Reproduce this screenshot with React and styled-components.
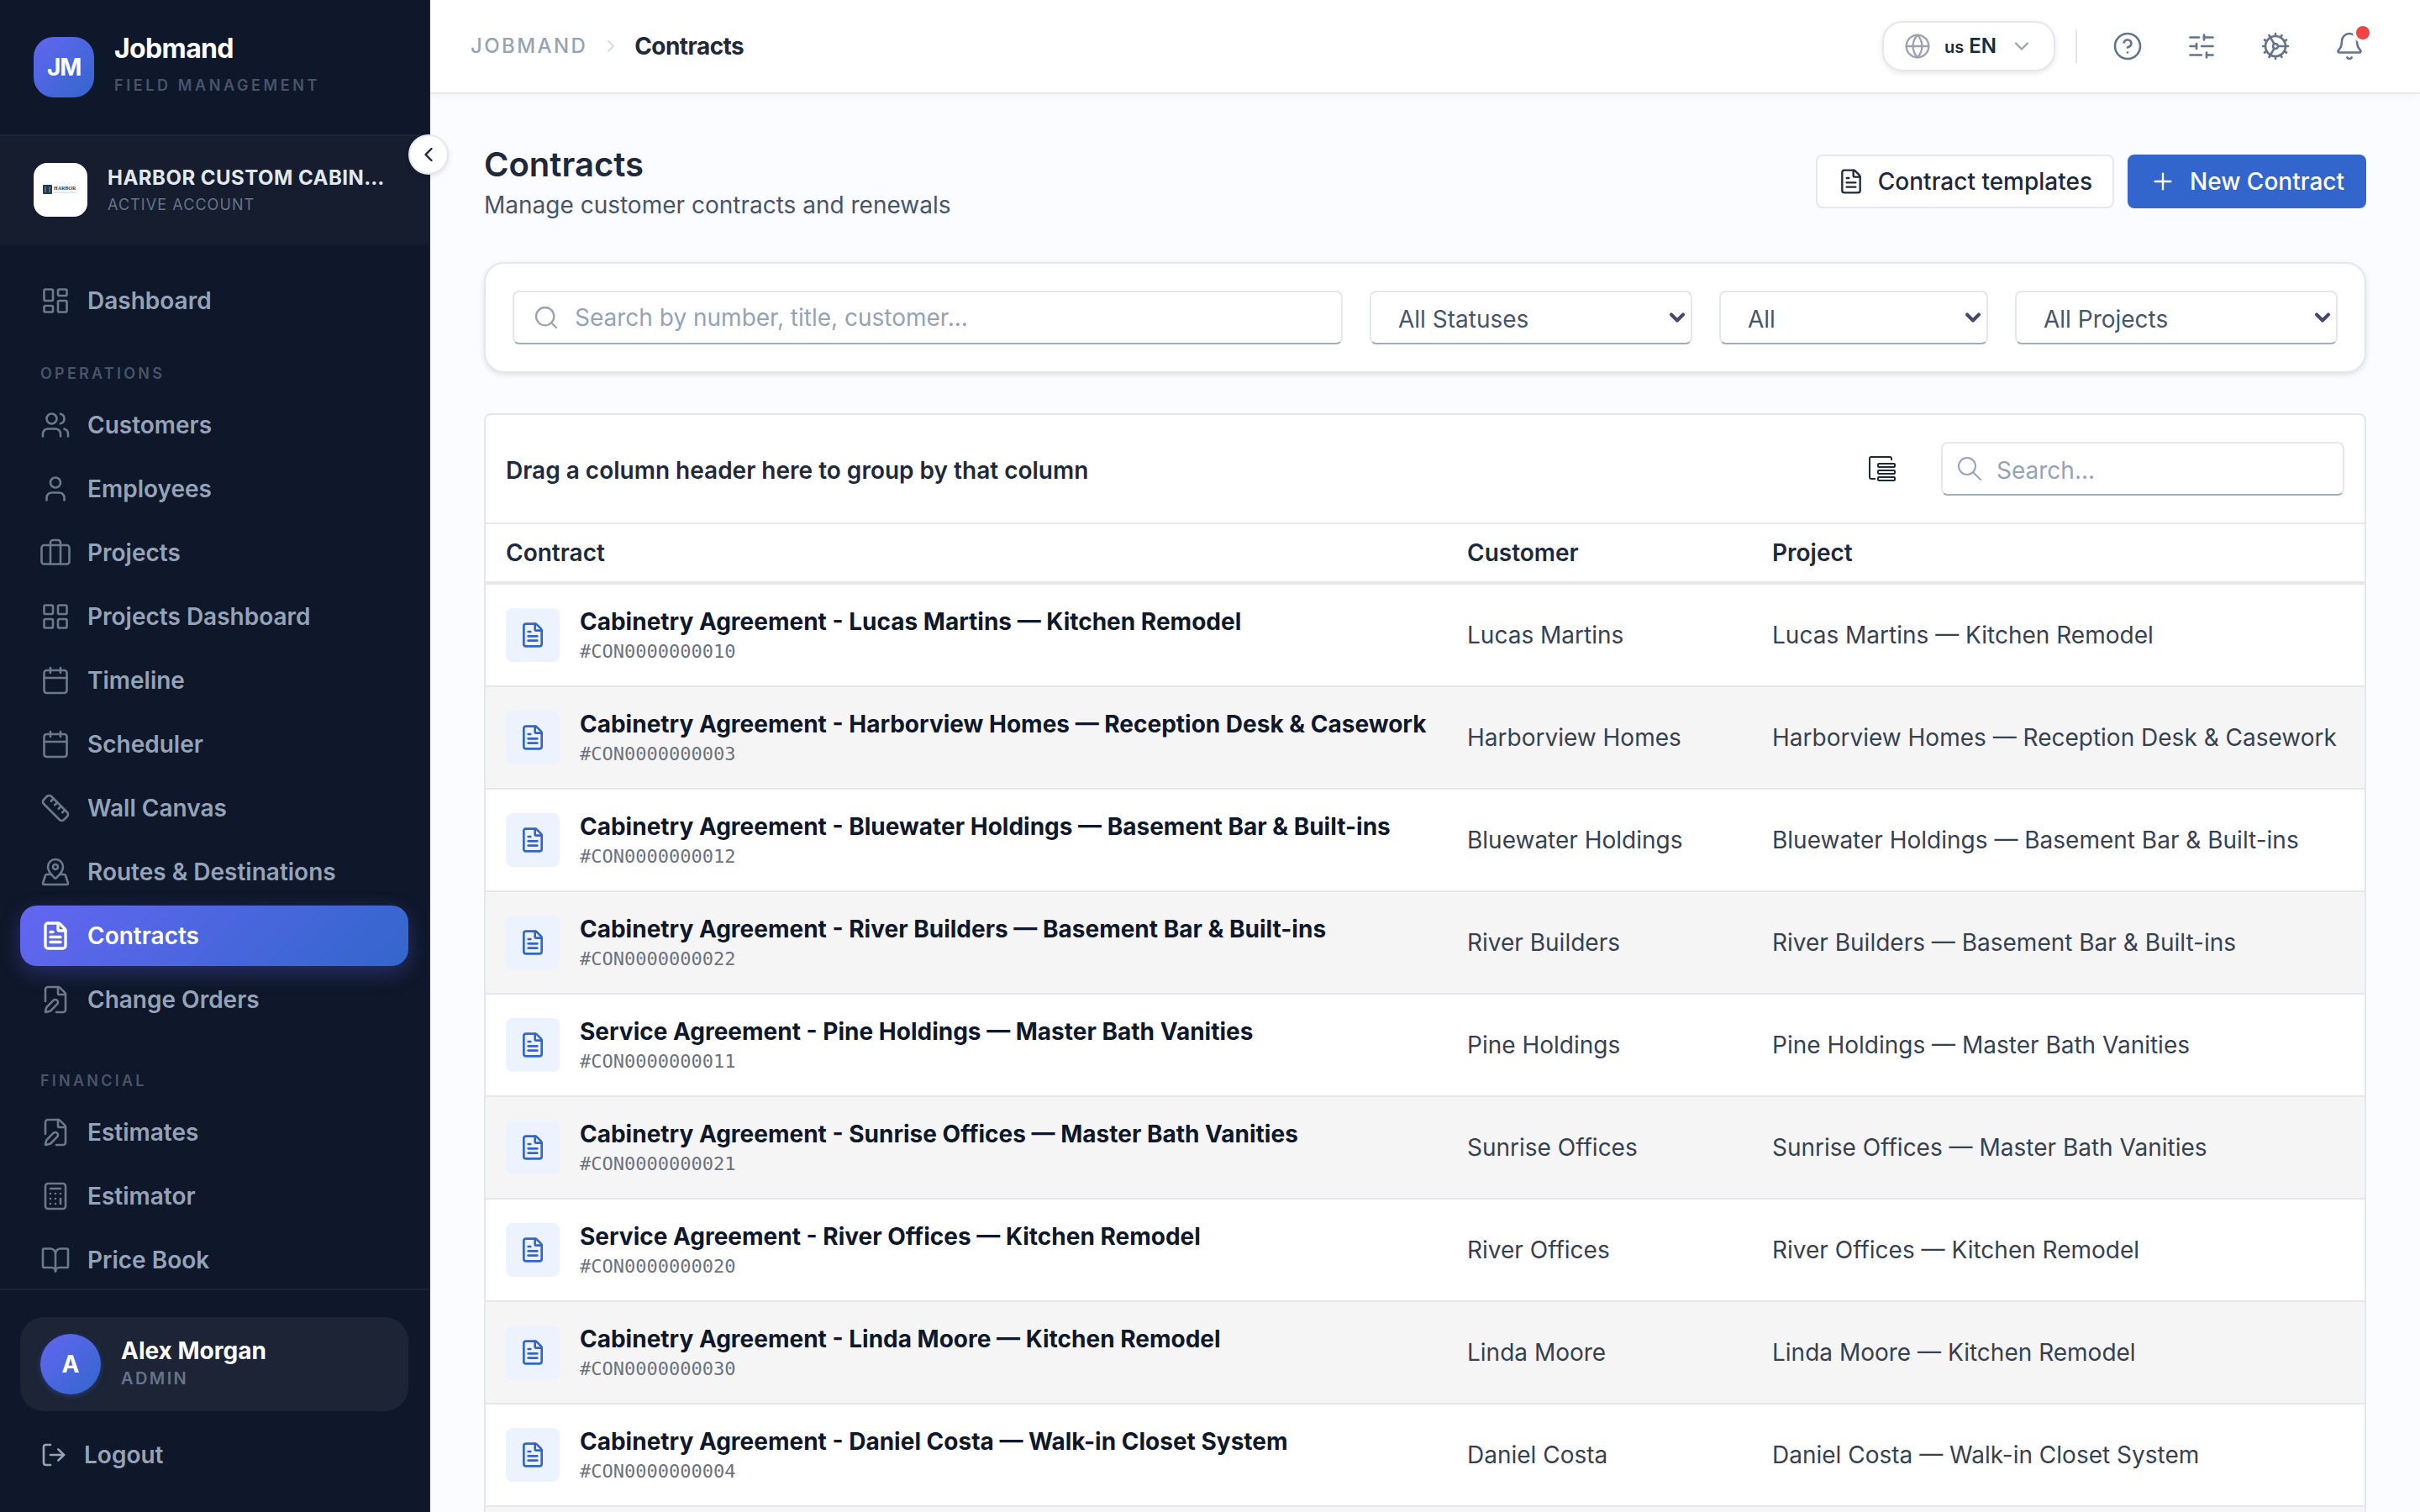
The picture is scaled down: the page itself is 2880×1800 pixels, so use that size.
import React, { useState } from 'react';
import styled, { createGlobalStyle } from 'styled-components';
import {
  LayoutDashboard,
  Users,
  User,
  LayoutGrid,
  Calendar,
  Ruler,
  MapPinned,
  FileText,
  FilePen,
  Calculator,
  BookOpen,
  ChevronLeft,
  ChevronRight,
  ChevronDown,
  Globe,
  CircleQuestionMark,
  SlidersHorizontal,
  Cog,
  Bell,
  Plus,
  Search,
} from 'lucide-react';

const GlobalStyle = createGlobalStyle`
  *, *::before, *::after {
    box-sizing: border-box;
  }

  body {
    margin: 0;
    background: #fbfcff;
    color: #1e293b;
    font-family: Inter, "Liberation Sans", sans-serif;
    font-size: 28px;
    line-height: 40px;
  }

  button, input, select {
    font: inherit;
    color: inherit;
  }

  button {
    cursor: pointer;
  }
`;

const Shell = styled.div`
  display: flex;
  height: 100vh;
  overflow: hidden;
`;

/* ---------- Sidebar ---------- */

const Sidebar = styled.aside`
  position: relative;
  z-index: 2;
  flex: none;
  display: flex;
  flex-direction: column;
  width: 512px;
  background: #0f172a;
  border-right: 2px solid #1a2130;
`;

const Brand = styled.div`
  display: flex;
  align-items: center;
  gap: 24px;
  height: 162px;
  padding: 0 40px;
  border-bottom: 2px solid #1c2536;
`;

const BrandMark = styled.div`
  display: grid;
  place-items: center;
  width: 72px;
  height: 72px;
  border-radius: 24px;
  background: linear-gradient(135deg, #6366f1, #3366cc);
  color: #fff;
  font-weight: 700;
  letter-spacing: -0.04em;
`;

const BrandText = styled.div`
  display: flex;
  flex-direction: column;
  gap: 12px;
  padding-bottom: 8px;
`;

const BrandName = styled.span`
  color: #fff;
  font-size: 32px;
  font-weight: 700;
  letter-spacing: -0.02em;
`;

const Overline = styled.span`
  color: #475569;
  font-size: 18px;
  line-height: 24px;
  font-weight: 600;
  letter-spacing: 0.2em;
  text-transform: uppercase;
`;

const Account = styled.div`
  display: flex;
  align-items: center;
  gap: 24px;
  padding: 32px 40px;
  background: #151d2e;
  border-bottom: 2px solid #131b2c;
`;

const AccountLogo = styled.div`
  flex: none;
  display: grid;
  place-items: center;
  width: 64px;
  height: 64px;
  border-radius: 16px;
  background: #fff;
`;

const AccountText = styled.div`
  display: flex;
  flex-direction: column;
  min-width: 0;
`;

const AccountName = styled.span`
  color: #e2e8f0;
  font-size: 24px;
  line-height: 36px;
  font-weight: 700;
  letter-spacing: 0.02em;
  white-space: nowrap;
`;

const AccountStatus = styled.span`
  color: #64748b;
  font-size: 18px;
  line-height: 28px;
  letter-spacing: 0.06em;
`;

const CollapseButton = styled.button`
  position: absolute;
  top: 160px;
  right: -24px;
  display: grid;
  place-items: center;
  width: 48px;
  height: 48px;
  padding: 0;
  border: 2px solid #e5e7eb;
  border-radius: 50%;
  background: #fff;
  box-shadow: 0 2px 6px rgba(0, 0, 0, 0.1);
`;

const Nav = styled.nav`
  flex: 1;
  min-height: 0;
  padding: 30px 24px 0;
  overflow: hidden;
`;

const NavSection = styled.section`
  margin-top: ${(p) => (p.$tight ? 39 : 49)}px;
`;

const NavHeading = styled.h2`
  margin: 0 0 13px;
  padding: 0 24px;
  color: #475569;
  font-size: 18px;
  line-height: 24px;
  font-weight: 600;
  letter-spacing: 0.18em;
  text-transform: uppercase;
`;

const NavList = styled.ul`
  display: flex;
  flex-direction: column;
  gap: 4px;
  margin: 0;
  padding: 0;
  list-style: none;
`;

const NavLink = styled.a`
  display: flex;
  align-items: center;
  gap: 20px;
  height: 72px;
  padding: 0 24px;
  border-radius: 20px;
  color: ${(p) => (p.$active ? '#fff' : '#94a3b8')};
  background: ${(p) => (p.$active ? 'linear-gradient(135deg, #6366f1, #3366cc)' : 'none')};
  box-shadow: ${(p) => (p.$active ? '0 8px 24px rgba(99, 102, 241, 0.3)' : 'none')};
  font-weight: 600;
  text-decoration: none;

  svg {
    opacity: ${(p) => (p.$active ? 1 : 0.7)};
  }
`;

const SidebarFooter = styled.div`
  display: flex;
  flex-direction: column;
  gap: 16px;
  padding: 32px 24px;
  border-top: 2px solid #1c2536;
`;

const UserCard = styled.div`
  display: flex;
  align-items: center;
  gap: 24px;
  padding: 20px 24px;
  border-radius: 28px;
  background: #1c2436;
`;

const Avatar = styled.div`
  display: grid;
  place-items: center;
  width: 72px;
  height: 72px;
  border-radius: 50%;
  background: linear-gradient(135deg, #6366f1, #3366cc);
  box-shadow: 0 2px 6px rgba(51, 102, 204, 0.4);
  color: #fff;
  font-weight: 700;
`;

const UserText = styled.div`
  display: flex;
  flex-direction: column;
`;

const UserName = styled.span`
  color: #fff;
  line-height: 34px;
  font-weight: 700;
`;

const UserRole = styled.span`
  color: #64748b;
  font-size: 20px;
  line-height: 32px;
  font-weight: 600;
  letter-spacing: 0.12em;
`;

const LogoutButton = styled.button`
  display: flex;
  align-items: center;
  gap: 20px;
  height: 72px;
  padding: 0 24px;
  border: 0;
  background: none;
  color: #94a3b8;
  font-weight: 600;
`;

/* ---------- Top bar ---------- */

const Page = styled.div`
  flex: 1;
  display: flex;
  flex-direction: column;
  min-width: 0;
`;

const TopBar = styled.header`
  flex: none;
  display: flex;
  align-items: center;
  justify-content: space-between;
  height: 112px;
  padding: 0 48px;
  background: #fff;
  border-bottom: 2px solid #e5e7eb;
  box-shadow: 0 2px 12px rgba(15, 23, 42, 0.04);
`;

const Breadcrumb = styled.nav`
  display: flex;
  align-items: center;
  gap: 16px;
`;

const CrumbLink = styled.a`
  color: #94a3b8;
  font-size: 24px;
  font-weight: 500;
  letter-spacing: 0.1em;
  text-decoration: none;
`;

const CrumbCurrent = styled.span`
  color: #1e293b;
  font-weight: 700;
  letter-spacing: -0.02em;
`;

const TopActions = styled.div`
  display: flex;
  align-items: center;
  gap: 16px;
`;

const LanguageButton = styled.button`
  display: flex;
  align-items: center;
  gap: 16px;
  height: 60px;
  padding: 0 24px;
  border: 2px solid #e5e7eb;
  border-radius: 24px;
  background: #fff;
  box-shadow: 0 2px 6px rgba(15, 23, 42, 0.1);
  color: #1f2937;
  font-size: 24px;
  font-weight: 600;

  svg {
    color: #9ca3af;
  }
`;

const Flag = styled.span`
  margin-right: 6px;
  font-size: 20px;
`;

const Divider = styled.span`
  width: 2px;
  height: 40px;
  margin: 0 8px;
  background: #e5e7eb;
`;

const IconButton = styled.button`
  position: relative;
  display: grid;
  place-items: center;
  width: 72px;
  height: 72px;
  padding: 0;
  border: 0;
  background: none;
  color: #64748b;
`;

const UnreadDot = styled.span`
  position: absolute;
  top: 12px;
  right: 12px;
  width: 16px;
  height: 16px;
  border-radius: 50%;
  background: #ef4444;
  box-shadow: 0 0 0 4px #fff;
`;

/* ---------- Content ---------- */

const Content = styled.main`
  display: flex;
  flex-direction: column;
  flex: 1;
  min-height: 0;
  padding: 56px 64px 0;
  overflow: hidden;
`;

const PageHead = styled.div`
  flex: none;
  display: flex;
  align-items: center;
  justify-content: space-between;
  margin-bottom: 48px;
`;

const PageTitle = styled.h1`
  margin: 0;
  font-size: 40px;
  line-height: 56px;
  font-weight: 600;
`;

const PageLead = styled.p`
  margin: 0;
  color: #475569;
`;

const ButtonRow = styled.div`
  display: flex;
  gap: 16px;
`;

const Button = styled.button`
  display: flex;
  align-items: center;
  gap: 16px;
  height: 64px;
  padding: 0 24px;
  border: 2px solid ${(p) => (p.$primary ? '#3366cc' : '#e5e7eb')};
  border-radius: 8px;
  background: ${(p) => (p.$primary ? '#3366cc' : '#fff')};
  color: ${(p) => (p.$primary ? '#fff' : '#1e293b')};
  font-weight: 500;
`;

const FilterCard = styled.form`
  flex: none;
  display: flex;
  gap: 32px;
  margin-bottom: 48px;
  padding: 32px;
  border: 2px solid #e5e7eb;
  border-radius: 24px;
  background: #fff;
  box-shadow: 0 2px 6px rgba(15, 23, 42, 0.12);
`;

const Field = styled.label`
  position: relative;
  flex: ${(p) => (p.$width ? `0 0 ${p.$width}px` : 1)};

  svg {
    position: absolute;
    pointer-events: none;
  }
`;

const TextInput = styled.input`
  display: block;
  width: 100%;
  height: 64px;
  padding: ${(p) => (p.$compact ? '4px 24px 0 64px' : '0 24px 0 72px')};
  border: 2px solid #e5e7eb;
  border-bottom-color: #a0aec0;
  border-radius: 8px;
  background: #fff;
  outline: none;

  &::placeholder {
    color: #94a3b8;
    opacity: 1;
  }

  & + svg {
    top: ${(p) => (p.$compact ? 18 : 16)}px;
    left: ${(p) => (p.$compact ? 20 : 24)}px;
    color: ${(p) => (p.$compact ? '#94a3b8' : '#9ca3af')};
  }
`;

const Select = styled.select`
  appearance: none;
  display: block;
  width: 100%;
  height: 64px;
  padding: 4px 32px 0;
  border: 2px solid #e5e7eb;
  border-bottom-color: #a0aec0;
  border-radius: 8px;
  background: #fff;
  color: #475569;

  & + svg {
    top: 18px;
    right: 4px;
    color: #47496b;
  }
`;

const GridCard = styled.section`
  flex: none;
  border: 2px solid #e5e7eb;
  border-radius: 8px;
  background: #fff;
  overflow: hidden;
`;

const GridToolbar = styled.div`
  display: flex;
  align-items: center;
  justify-content: space-between;
  padding: 32px 24px;
  border-bottom: 2px solid #e5e7eb;
`;

const GroupHint = styled.span`
  padding-top: 4px;
  font-weight: 600;
`;

const ToolbarTools = styled.div`
  display: flex;
  align-items: center;
  gap: 32px;
`;

const ColumnButton = styled(IconButton)`
  width: 76px;
  height: 64px;
  color: #1e293b;
`;

const Table = styled.table`
  width: 100%;
  border-collapse: separate;
  border-spacing: 0;
  table-layout: fixed;
`;

const Th = styled.th`
  width: ${(p) => (p.$width ? `${p.$width}px` : 'auto')};
  height: 72px;
  padding: 0 24px;
  border-bottom: 4px solid #e5e7eb;
  font-weight: 600;
  text-align: left;
`;

const Row = styled.tr`
  &:nth-child(even) {
    background: #f5f5f5;
  }
`;

const Td = styled.td`
  height: 122px;
  padding: 0 24px;
  border-bottom: 2px solid #e5e7eb;
  color: #374151;
  white-space: nowrap;
`;

const ContractCell = styled.div`
  display: flex;
  align-items: center;
  gap: 24px;
`;

const ContractIcon = styled.span`
  display: grid;
  place-items: center;
  width: 64px;
  height: 64px;
  border-radius: 8px;
  background: #edf2ff;
  color: #3366cc;
`;

const ContractTitle = styled.div`
  color: #0f172a;
  font-weight: 700;
`;

const ContractNumber = styled.div`
  color: #6b7280;
  font-family: "DejaVu Sans Mono", "Liberation Mono", monospace;
  font-size: 22px;
  line-height: 32px;
`;

/* ---------- Icons that lucide has in another shape ---------- */

const svgProps = {
  viewBox: '0 0 24 24',
  fill: 'none',
  stroke: 'currentColor',
  strokeLinecap: 'round',
  strokeLinejoin: 'round',
  'aria-hidden': true,
};

function LuggageIcon({ size = 36, strokeWidth = 1.75 }) {
  return (
    <svg {...svgProps} width={size} height={size} strokeWidth={strokeWidth}>
      <rect x="1" y="6" width="22" height="15" rx="2" />
      <path d="M8 21V4a2 2 0 0 1 2-2h4a2 2 0 0 1 2 2v17" />
    </svg>
  );
}

function LogoutIcon() {
  return (
    <svg {...svgProps} width={32} height={32} strokeWidth={2}>
      <path d="M9 21H5a2 2 0 0 1-2-2V5a2 2 0 0 1 2-2h4" />
      <path d="M9 12h12" />
      <path d="m16 7 5 5-5 5" />
    </svg>
  );
}

function ColumnChooserIcon() {
  return (
    <svg width={32} height={30} viewBox="0 0 32 30" fill="none" stroke="currentColor" strokeWidth={2} aria-hidden="true">
      <path d="M27 5V3a2 2 0 0 0-2-2H3a2 2 0 0 0-2 2v22a2 2 0 0 0 2 2h5" />
      <rect x="11" y="9" width="20" height="4" rx="1" />
      <rect x="11" y="17" width="20" height="4" rx="1" />
      <rect x="11" y="25" width="20" height="4" rx="1" />
    </svg>
  );
}

function GridSearchIcon() {
  return (
    <svg width={28} height={28} viewBox="0 0 28 28" fill="none" stroke="currentColor" strokeWidth={2} aria-hidden="true">
      <circle cx="11" cy="11" r="10" />
      <path d="m18 18 9 9" strokeLinecap="round" />
    </svg>
  );
}

function HarborLogo() {
  return (
    <svg width={44} height={16} viewBox="0 0 44 16" aria-hidden="true">
      <rect x="1" y="2" width="11" height="11" rx="1" fill="#1e3a4c" />
      <path d="M4 4v7M9 4v7" stroke="#8fa3b0" strokeWidth="1" />
      <text x="14" y="8" fontFamily="Liberation Serif, serif" fontSize="6" fontWeight="700" fill="#2b3440">HARBOR</text>
      <path d="M14 11h26" stroke="#c9cfd6" strokeWidth="1" />
    </svg>
  );
}

const OPERATIONS = [
  { label: 'Customers', icon: Users },
  { label: 'Employees', icon: User },
  { label: 'Projects', icon: LuggageIcon },
  { label: 'Projects Dashboard', icon: LayoutGrid },
  { label: 'Timeline', icon: Calendar },
  { label: 'Scheduler', icon: Calendar },
  { label: 'Wall Canvas', icon: Ruler },
  { label: 'Routes & Destinations', icon: MapPinned },
  { label: 'Contracts', icon: FileText },
  { label: 'Change Orders', icon: FilePen },
];

const FINANCIAL = [
  { label: 'Estimates', icon: FilePen },
  { label: 'Estimator', icon: Calculator },
  { label: 'Price Book', icon: BookOpen },
];

const CONTRACTS = [
  { kind: 'Cabinetry', customer: 'Lucas Martins', job: 'Kitchen Remodel', number: '0000000010' },
  { kind: 'Cabinetry', customer: 'Harborview Homes', job: 'Reception Desk & Casework', number: '0000000003' },
  { kind: 'Cabinetry', customer: 'Bluewater Holdings', job: 'Basement Bar & Built-ins', number: '0000000012' },
  { kind: 'Cabinetry', customer: 'River Builders', job: 'Basement Bar & Built-ins', number: '0000000022' },
  { kind: 'Service', customer: 'Pine Holdings', job: 'Master Bath Vanities', number: '0000000011' },
  { kind: 'Cabinetry', customer: 'Sunrise Offices', job: 'Master Bath Vanities', number: '0000000021' },
  { kind: 'Service', customer: 'River Offices', job: 'Kitchen Remodel', number: '0000000020' },
  { kind: 'Cabinetry', customer: 'Linda Moore', job: 'Kitchen Remodel', number: '0000000030' },
  { kind: 'Cabinetry', customer: 'Daniel Costa', job: 'Walk-in Closet System', number: '0000000004' },
];

function NavItems({ items, current }) {
  return (
    <NavList>
      {items.map(({ label, icon: Icon }) => (
        <li key={label}>
          <NavLink href="#" $active={label === current} aria-current={label === current ? 'page' : undefined}>
            <Icon size={36} strokeWidth={label === current ? 2.25 : 1.75} />
            {label}
          </NavLink>
        </li>
      ))}
    </NavList>
  );
}

function AppSidebar() {
  return (
    <Sidebar>
      <Brand>
        <BrandMark>JM</BrandMark>
        <BrandText>
          <BrandName>Jobmand</BrandName>
          <Overline>Field Management</Overline>
        </BrandText>
      </Brand>
      <Account>
        <AccountLogo>
          <HarborLogo />
        </AccountLogo>
        <AccountText>
          <AccountName>HARBOR CUSTOM CABIN…</AccountName>
          <AccountStatus>ACTIVE ACCOUNT</AccountStatus>
        </AccountText>
      </Account>
      <CollapseButton aria-label="Collapse sidebar">
        <ChevronLeft size={28} />
      </CollapseButton>
      <Nav aria-label="Main">
        <NavItems items={[{ label: 'Dashboard', icon: LayoutDashboard }]} />
        <NavSection $tight>
          <NavHeading>Operations</NavHeading>
          <NavItems items={OPERATIONS} current="Contracts" />
        </NavSection>
        <NavSection>
          <NavHeading>Financial</NavHeading>
          <NavItems items={FINANCIAL} />
        </NavSection>
      </Nav>
      <SidebarFooter>
        <UserCard>
          <Avatar>A</Avatar>
          <UserText>
            <UserName>Alex Morgan</UserName>
            <UserRole>ADMIN</UserRole>
          </UserText>
        </UserCard>
        <LogoutButton>
          <LogoutIcon />
          Logout
        </LogoutButton>
      </SidebarFooter>
    </Sidebar>
  );
}

function AppTopBar() {
  return (
    <TopBar>
      <Breadcrumb aria-label="Breadcrumb">
        <CrumbLink href="#">JOBMAND</CrumbLink>
        <ChevronRight size={24} strokeWidth={1.75} color="#cbd5e1" />
        <CrumbCurrent>Contracts</CrumbCurrent>
      </Breadcrumb>
      <TopActions>
        <LanguageButton>
          <Globe size={32} strokeWidth={1.75} />
          <span>
            <Flag>us</Flag>
            EN
          </span>
          <ChevronDown size={28} strokeWidth={2} />
        </LanguageButton>
        <Divider />
        <IconButton aria-label="Help">
          <CircleQuestionMark size={36} strokeWidth={1.75} />
        </IconButton>
        <IconButton aria-label="Preferences">
          <SlidersHorizontal size={36} strokeWidth={1.75} />
        </IconButton>
        <IconButton aria-label="Settings">
          <Cog size={36} strokeWidth={1.75} />
        </IconButton>
        <IconButton aria-label="Notifications">
          <Bell size={36} strokeWidth={1.75} />
          <UnreadDot />
        </IconButton>
      </TopActions>
    </TopBar>
  );
}

function SelectField({ label, value, width }) {
  return (
    <Field $width={width}>
      <Select aria-label={label} defaultValue={value}>
        <option>{value}</option>
      </Select>
      <ChevronDown size={28} strokeWidth={3.5} />
    </Field>
  );
}

function ContractsGrid() {
  const [query, setQuery] = useState('');

  return (
    <GridCard>
      <GridToolbar>
        <GroupHint>Drag a column header here to group by that column</GroupHint>
        <ToolbarTools>
          <ColumnButton aria-label="Column chooser">
            <ColumnChooserIcon />
          </ColumnButton>
          <Field $width={480}>
            <TextInput
              $compact
              aria-label="Search contracts"
              placeholder="Search..."
              value={query}
              onChange={(e) => setQuery(e.target.value)}
            />
            <GridSearchIcon />
          </Field>
        </ToolbarTools>
      </GridToolbar>
      <Table>
        <thead>
          <tr>
            <Th>Contract</Th>
            <Th $width={363}>Customer</Th>
            <Th $width={729}>Project</Th>
          </tr>
        </thead>
        <tbody>
          {CONTRACTS.map(({ kind, customer, job, number }) => (
            <Row key={number}>
              <Td>
                <ContractCell>
                  <ContractIcon>
                    <FileText size={32} />
                  </ContractIcon>
                  <div>
                    <ContractTitle>{`${kind} Agreement - ${customer} — ${job}`}</ContractTitle>
                    <ContractNumber>#CON{number}</ContractNumber>
                  </div>
                </ContractCell>
              </Td>
              <Td>{customer}</Td>
              <Td>{`${customer} — ${job}`}</Td>
            </Row>
          ))}
          <Row>
            <Td colSpan={3} />
          </Row>
        </tbody>
      </Table>
    </GridCard>
  );
}

function App() {
  return (
    <>
      <GlobalStyle />
      <Shell>
        <AppSidebar />
        <Page>
          <AppTopBar />
          <Content>
            <PageHead>
              <div>
                <PageTitle>Contracts</PageTitle>
                <PageLead>Manage customer contracts and renewals</PageLead>
              </div>
              <ButtonRow>
                <Button>
                  <FileText size={32} strokeWidth={1.75} />
                  Contract templates
                </Button>
                <Button $primary>
                  <Plus size={32} strokeWidth={1.75} />
                  New Contract
                </Button>
              </ButtonRow>
            </PageHead>
            <FilterCard onSubmit={(e) => e.preventDefault()}>
              <Field>
                <TextInput aria-label="Search by number, title or customer" placeholder="Search by number, title, customer..." />
                <Search size={32} strokeWidth={1.75} />
              </Field>
              <SelectField label="Status" value="All Statuses" width={384} />
              <SelectField label="Type" value="All" width={320} />
              <SelectField label="Project" value="All Projects" width={384} />
            </FilterCard>
            <ContractsGrid />
          </Content>
        </Page>
      </Shell>
    </>
  );
}

export default App;
